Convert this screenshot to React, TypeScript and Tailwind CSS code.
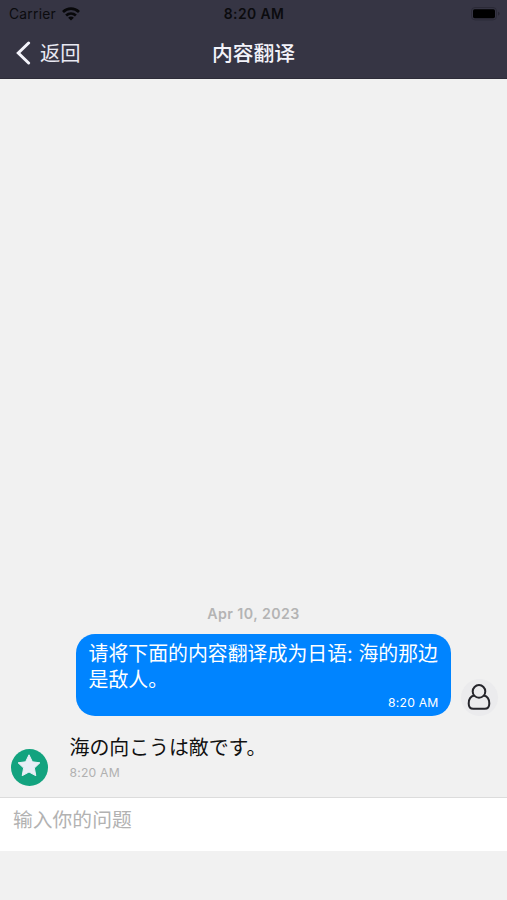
import type { ReactNode } from 'react';

const MESSAGES = {
  date: 'Apr 10, 2023',
  sent: { text: '请将下面的内容翻译成为日语: 海的那边是敌人。', time: '8:20 AM' },
  received: { text: '海の向こうは敵です。', time: '8:20 AM' },
};

function WifiIcon() {
  return (
    <svg className="h-[14px] w-[18px]" viewBox="0 0 18 14" fill="none" stroke="#08080a" strokeWidth="2.7">
      <path d="M1 5C5.6.5 12.4.5 17 5" />
      <path d="M4.1 8.5c2.9-2.7 6.9-2.7 9.8 0" />
      <path d="M9 13.6 6.1 10.7c1.6-1.5 4.2-1.5 5.8 0Z" fill="#08080a" stroke="none" />
    </svg>
  );
}

function BatteryIcon() {
  return (
    <svg className="h-[14px] w-[30px]" viewBox="0 0 30 14">
      <rect x="0.5" y="0.5" width="25" height="12.4" rx="3.5" fill="none" stroke="#2b2a37" />
      <rect x="2" y="2.2" width="22" height="9" rx="1.6" fill="#000" />
      <path d="M27.2 4.8c1.8.7 1.8 3.2 0 3.9Z" fill="#24232e" />
    </svg>
  );
}

function StatusBar() {
  return (
    <div className="grid h-[28px] grid-cols-[169px_169px_169px] items-center text-[#0b0b0e]">
      <div className="flex items-center gap-[6px] pl-[9px]">
        <span className="pt-px text-[13.8px] tracking-[0.25px]">Carrier</span>
        <WifiIcon />
      </div>
      <span className="pt-px pl-px text-center text-[13.9px] font-semibold tracking-[0.4px]">8:20 AM</span>
      <div className="flex justify-end pr-[6px] pb-px">
        <BatteryIcon />
      </div>
    </div>
  );
}

function Avatar({ className, children }: { className: string; children: ReactNode }) {
  return (
    <div className={`flex size-[37px] shrink-0 items-center justify-center rounded-full ${className}`}>
      {children}
    </div>
  );
}

export default function App() {
  return (
    <div className="flex h-[900px] w-[507px] flex-col overflow-hidden bg-[#f1f1f1] font-[Inter,'Noto_Sans_CJK_SC',sans-serif]">
      {/* header */}
      <header className="h-[79px] shrink-0 border-b border-[#2d2c38] bg-[#363544]">
        <StatusBar />
        <div className="grid h-[49px] grid-cols-3 items-center">
          <button className="flex items-center gap-[9px] pl-[16px] text-[20.3px] leading-[30px] text-[#e9e9f2]">
            <svg className="h-[24px] w-[15px]" viewBox="0 0 15 24" fill="none" stroke="#f4f4fb" strokeWidth="3" strokeLinecap="round">
              <path d="M12.6 2 2.3 12l10.3 10" />
            </svg>
            <span className="pt-[2px]">返回</span>
          </button>
          <h1 className="pt-[2px] text-center text-[20.8px] leading-[30px] font-medium text-[#f3f3fa]">内容翻译</h1>
        </div>
      </header>

      {/* messages */}
      <main className="flex min-h-0 flex-1 flex-col justify-end">
        <p className="mb-[10px] text-center text-[14.2px] leading-[20px] font-semibold tracking-[0.45px] text-[#b4b4b4]">
          {MESSAGES.date}
        </p>

        <div className="flex items-end justify-end gap-[10px] pr-[9.5px]">
          <div className="h-[82px] w-[374.5px] rounded-[19px] bg-[#0084ff] pt-[7px] pr-[12px] pl-[12.5px] text-white">
            <p className="text-[19.9px] leading-[26px] whitespace-pre-wrap">{MESSAGES.sent.text}</p>
            <p className="pt-px text-right text-[12.2px] leading-[18px] tracking-[0.2px]">{MESSAGES.sent.time}</p>
          </div>
          <Avatar className="bg-[#ebebed]">
            <svg className="mb-px h-[26px] w-[24px]" viewBox="0 0 24 26" fill="none" stroke="#25252b" strokeWidth="2">
              <circle cx="12" cy="7.4" r="6.3" />
              <path d="M7.2 11.5C3.6 12.3 1.7 15.4 1.7 19.4c0 3.7 1.3 5.4 4.6 5.4h11.4c3.3 0 4.6-1.7 4.6-5.4 0-4-1.9-7.1-5.5-7.9" />
            </svg>
          </Avatar>
        </div>

        <div className="mt-[18px] mb-[11.5px] flex items-end pl-[10.5px]">
          <Avatar className="bg-[#13a37f]">
            <svg className="mb-[3px] h-[23px] w-[24px]" viewBox="0 0 24 23" fill="#e8eef6" stroke="#e8eef6" strokeWidth="1" strokeLinejoin="round">
              <path d="m12 .8 3.4 7 7.5 1-5.5 5.200 1.400 7.700-6.800-3.700-6.800 3.700 1.400-7.700L1.100 8.800l7.500-1Z" />
            </svg>
          </Avatar>
          <div className="ml-[22px] h-[52px]">
            <p className="font-[Inter,'Noto_Sans_CJK_JP',sans-serif] text-[19.9px] leading-[28px] text-[#111]">
              {MESSAGES.received.text}
            </p>
            <p className="text-[12.2px] leading-[22px] tracking-[0.2px] text-[#b0b0b0]">{MESSAGES.received.time}</p>
          </div>
        </div>
      </main>

      {/* input */}
      <footer className="h-[103px] shrink-0">
        <div className="h-[54px] border-t border-[#dcdcdc] bg-white px-[13px] pt-[8px]">
          <input
            className="block h-[28px] w-full text-[19.8px] leading-[28px] outline-none placeholder:text-[#b2b2b2]"
            placeholder="输入你的问题"
          />
        </div>
      </footer>
    </div>
  );
}
